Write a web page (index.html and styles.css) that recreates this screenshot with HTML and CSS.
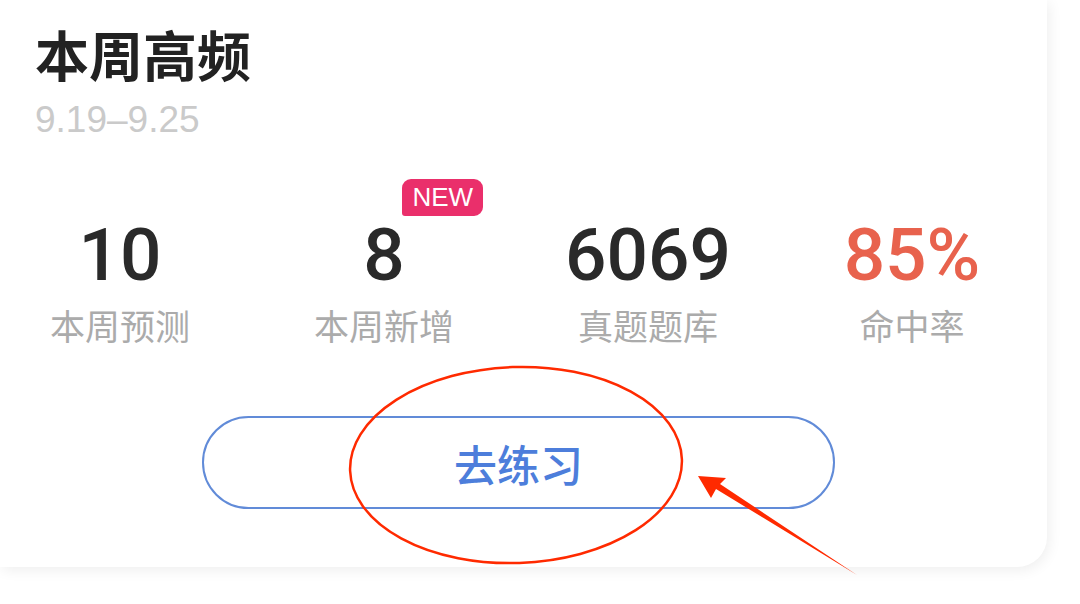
FILE: index.html
```html
<!DOCTYPE html>
<html lang="zh">
<head>
<meta charset="utf-8">
<link rel="stylesheet" href="styles.css">
</head>
<body>
<div class="page">
  <div class="card">
    <div class="head">
      <h1 class="title">本周高频</h1>
      <div class="date">9.19–9.25</div>
    </div>
    <div class="stats">
      <div class="stat">
        <div class="num">10</div>
        <div class="label">本周预测</div>
      </div>
      <div class="stat">
        <div class="num"><span class="num-wrap">8<span class="badge">NEW</span></span></div>
        <div class="label">本周新增</div>
      </div>
      <div class="stat">
        <div class="num">6069</div>
        <div class="label">真题题库</div>
      </div>
      <div class="stat">
        <div class="num num-red">85%</div>
        <div class="label">命中率</div>
      </div>
    </div>
    <div class="btn-row">
      <div class="btn">去练习</div>
    </div>
  </div>
  <svg class="annot" width="1080" height="604" viewBox="0 0 1080 604">
    <ellipse cx="516" cy="465" rx="166" ry="98" fill="none" stroke="#ff2a00" stroke-width="2.5" transform="rotate(-2 516 465)"/>
    <polygon points="698,476 726,478 720,484 857,575 716,489 711,498" fill="#ff2a00"/>
  </svg>
</div>
</body>
</html>
```

FILE: styles.css
```css
html, body {
  margin: 0;
  padding: 0;
  background: #ffffff;
}
.page {
  position: relative;
  width: 1080px;
  height: 604px;
  overflow: hidden;
  background: #ffffff;
}
.card {
  width: 1047px;
  height: 567px;
  background: #ffffff;
  border-radius: 0 0 30px 0;
  box-shadow: 2px 3px 14px rgba(0, 0, 0, 0.07);
  display: flex;
  flex-direction: column;
}
.head {
  padding: 24px 0 0 35px;
}
.title {
  margin: 0;
  font-family: "Noto Sans CJK SC", sans-serif;
  font-size: 54px;
  line-height: 60px;
  font-weight: 700;
  color: #222222;
}
.date {
  margin-top: 15px;
  font-family: "Liberation Sans", Arial, sans-serif;
  font-size: 37px;
  line-height: 41px;
  color: #cacaca;
}
.stats {
  margin-top: 75px;
  margin-left: -12px;
  width: 1056px;
  display: grid;
  grid-template-columns: repeat(4, 1fr);
}
.stat {
  display: flex;
  flex-direction: column;
  align-items: center;
}
.num {
  font-family: Roboto, "Liberation Sans", sans-serif;
  font-weight: 500;
  font-size: 73px;
  line-height: 80px;
  color: #2a2a2a;
}
.num-red {
  color: #e8624d;
}
.num-wrap {
  position: relative;
}
.badge {
  position: absolute;
  left: 39px;
  top: -33px;
  width: 81px;
  height: 37px;
  border-radius: 9px 9px 9px 3px;
  background: #ea2f6b;
  color: #ffffff;
  font-family: "Liberation Sans", Arial, sans-serif;
  font-weight: 400;
  font-size: 26px;
  line-height: 37px;
  text-align: center;
}
.label {
  margin-top: 10px;
  font-family: "Noto Sans CJK SC", sans-serif;
  font-size: 35px;
  line-height: 40px;
  color: #ababab;
}
.btn-row {
  margin-top: 71px;
  padding-left: 202px;
}
.btn {
  width: 629px;
  height: 89px;
  border: 2px solid #618bd8;
  border-radius: 47px;
  display: flex;
  align-items: center;
  justify-content: center;
  font-family: "Noto Sans CJK SC", sans-serif;
  font-size: 43px;
  font-weight: 500;
  color: #4d7edb;
}
.annot {
  position: absolute;
  left: 0;
  top: 0;
  pointer-events: none;
}
```
